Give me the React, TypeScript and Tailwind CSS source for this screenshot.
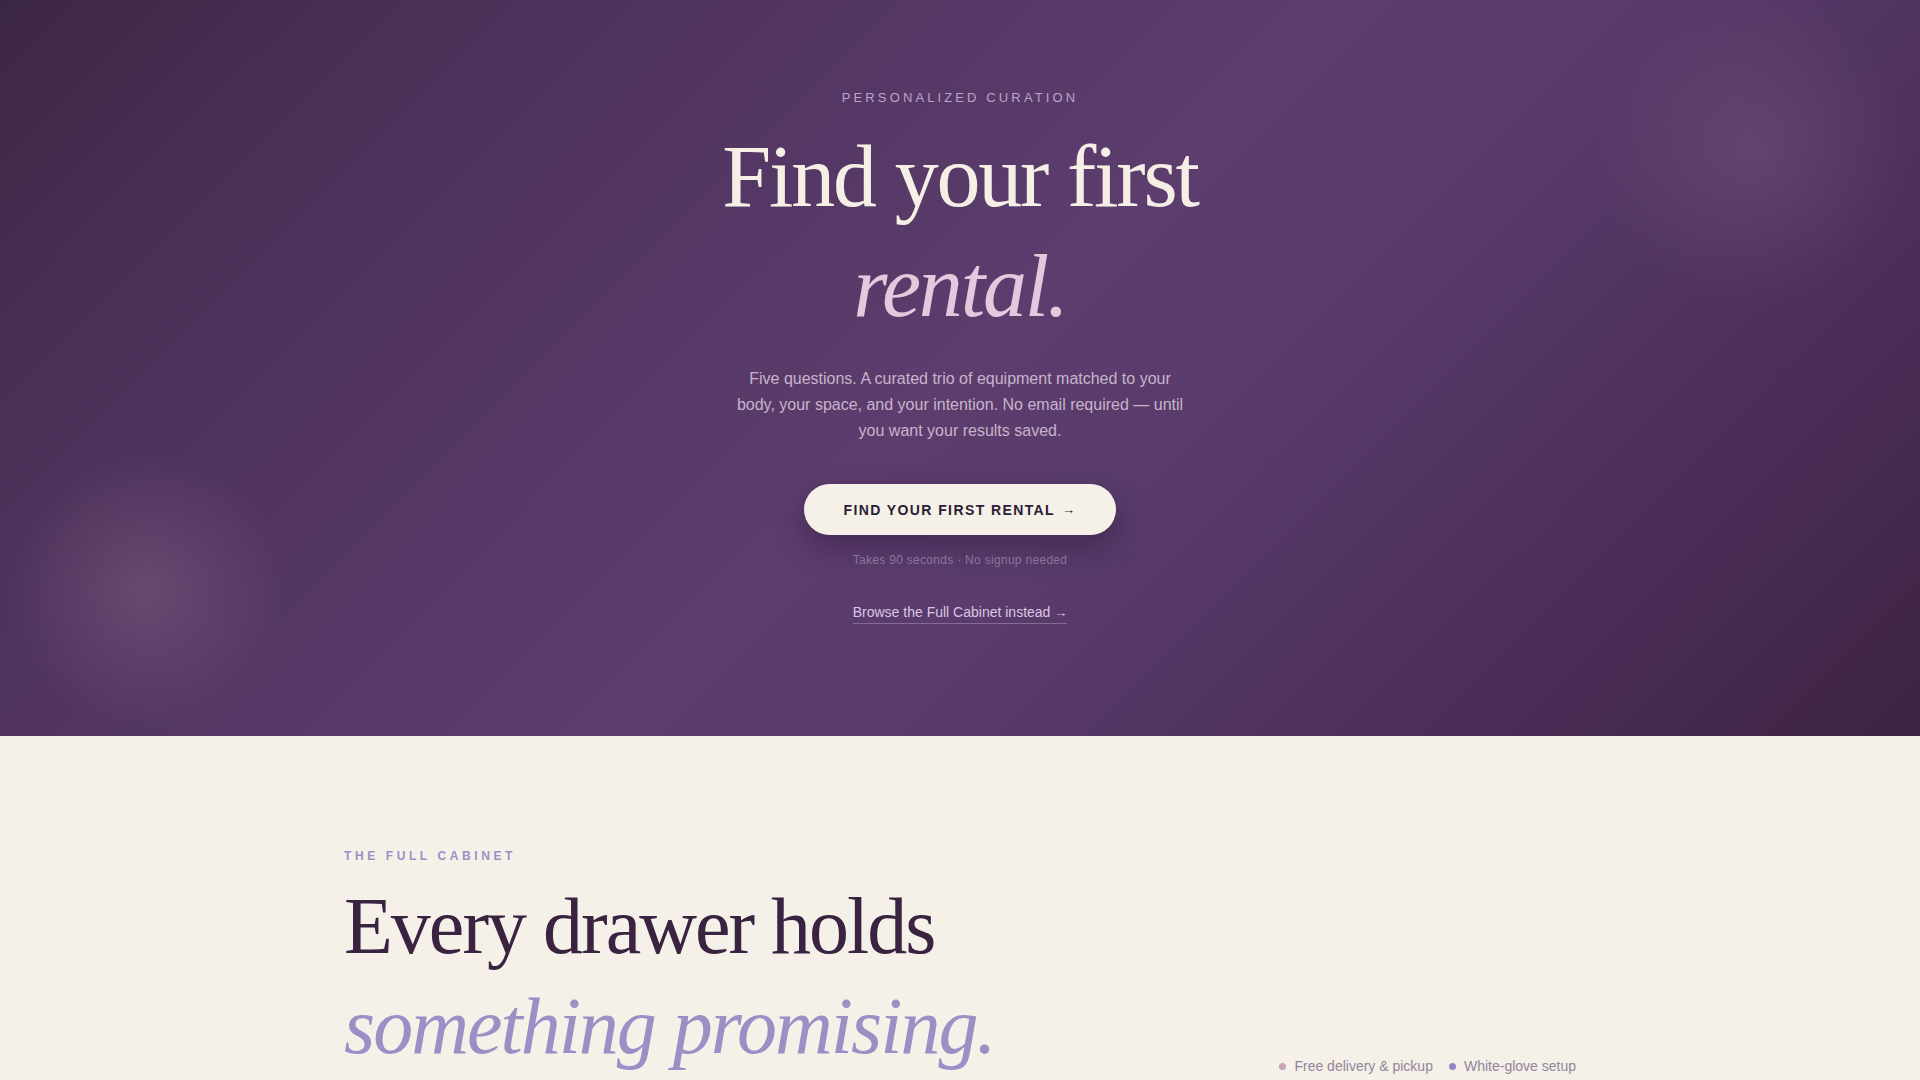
import React from "react";

const serif = { fontFamily: '"Liberation Serif", "Times New Roman", serif' };

export default function App() {
  return (
    <div className="w-full min-h-screen bg-[#f5f0e8] font-['Liberation_Sans',Arial,sans-serif]">
      {/* Hero */}
      <section className="relative overflow-hidden h-[736px] bg-[linear-gradient(135deg,#3c2645_0%,#4a3057_16%,#5c3d6e_50%,#593c6b_60%,#482c55_85%,#3d2343_100%)]">
        <div className="pointer-events-none absolute left-[5px] top-[450px] h-[280px] w-[280px] rounded-full bg-[radial-gradient(circle,rgba(150,115,150,0.32)_0%,rgba(150,115,150,0.14)_40%,rgba(150,115,150,0)_70%)]" />
        <div className="pointer-events-none absolute left-[1593px] top-[-10px] h-[320px] w-[320px] rounded-full bg-[radial-gradient(circle,rgba(140,110,150,0.26)_0%,rgba(140,110,150,0.11)_40%,rgba(140,110,150,0)_70%)]" />

        <div className="relative flex flex-col items-center pt-[88px] text-center">
          <p className="text-[13px] leading-5 tracking-[0.24em] text-[#bca3cb]">
            PERSONALIZED CURATION
          </p>
          <h1
            style={serif}
            className="mt-[14px] text-[88px] leading-[1.25] tracking-tight font-normal"
          >
            <span className="block text-[#f5efe6]">Find your first</span>
            <span className="block italic text-[#e2c9dd]">rental.</span>
          </h1>
          <p className="mt-6 max-w-[460px] text-base leading-[26px] text-[#c8b4cb]">
            Five questions. A curated trio of equipment matched to your body, your
            space, and your intention. No email required — until you want your
            results saved.
          </p>
          <button className="mt-10 flex h-[51px] items-center rounded-full bg-[#f5f0e8] px-10 text-[14px] font-bold leading-5 tracking-[0.1em] text-[#2b1d35] shadow-[0_12px_30px_rgba(30,10,40,0.35)]">
            FIND YOUR FIRST RENTAL <span className="ml-[7px] text-[13px] font-normal">→</span>
          </button>
          <p className="mt-[15px] text-[12px] leading-5 tracking-wide text-[#8a769a]">
            Takes 90 seconds · No signup needed
          </p>
          <a className="mt-8 border-b border-[rgba(218,199,226,0.35)] text-[14px] leading-5 text-[#dac7e2]">
            Browse the Full Cabinet instead <span className="text-[13px]">→</span>
          </a>
        </div>
      </section>

      {/* Full cabinet */}
      <section className="bg-[#f5f0e8] pt-28 pb-24">
        <div className="mx-auto flex max-w-[1232px] items-end justify-between">
          <div>
            <p className="text-[12px] font-bold leading-4 tracking-[0.3em] text-[#9d90c4]">
              THE FULL CABINET
            </p>
            <h2
              style={serif}
              className="mt-3 text-[80px] leading-[1.25] tracking-tight font-normal"
            >
              <span className="block text-[#3a2341]">Every drawer holds</span>
              <span className="block italic text-[#9d8ec5]">something promising.</span>
            </h2>
          </div>
          <div className="flex items-center gap-4 text-[14px] leading-5 text-[#93859a]">
            <span className="flex items-center gap-2">
              <span className="h-[7px] w-[7px] rounded-full bg-[#c8a2b6]" />
              Free delivery &amp; pickup
            </span>
            <span className="flex items-center gap-2">
              <span className="h-[7px] w-[7px] rounded-full bg-[#9384c6]" />
              White-glove setup
            </span>
          </div>
        </div>
      </section>
    </div>
  );
}
